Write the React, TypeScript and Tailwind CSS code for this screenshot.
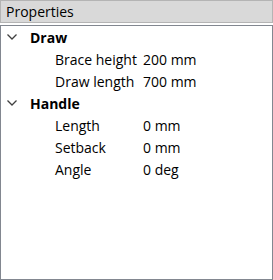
import React from "react";

const Chevron = () => (
  <svg width="10" height="6" viewBox="0 0 10 6" className="block">
    <path d="M0.5 0.5 L5 5 L9.5 0.5" fill="none" stroke="#404040" strokeWidth="1.3" />
  </svg>
);

const Group = ({ name, rows }: { name: string; rows: [string, string][] }) => (
  <div>
    <div className="flex items-center h-[22px]">
      <div className="w-[29px] pl-[6px] flex items-center">
        <Chevron />
      </div>
      <span className="font-bold">{name}</span>
    </div>
    {rows.map(([k, v]) => (
      <div key={k} className="flex items-center h-[22px]">
        <span className="pl-[54px] w-[142px] whitespace-nowrap">{k}</span>
        <span>{v}</span>
      </div>
    ))}
  </div>
);

export default function App() {
  return (
    <div
      className="w-[273px] h-[280px] bg-white flex flex-col text-[14px] text-black"
      style={{ fontFamily: '"Open Sans", "Noto Sans", sans-serif' }}
    >
      <div className="h-[23px] bg-[#d9d9d9] border border-[#b4b4b4] flex items-center pl-[5px] text-[14px]">
        Properties
      </div>
      <div className="mt-[2px] flex-1 border border-[#828790] bg-white">
        <Group name="Draw" rows={[["Brace height", "200 mm"], ["Draw length", "700 mm"]]} />
        <Group name="Handle" rows={[["Length", "0 mm"], ["Setback", "0 mm"], ["Angle", "0 deg"]]} />
      </div>
    </div>
  );
}
